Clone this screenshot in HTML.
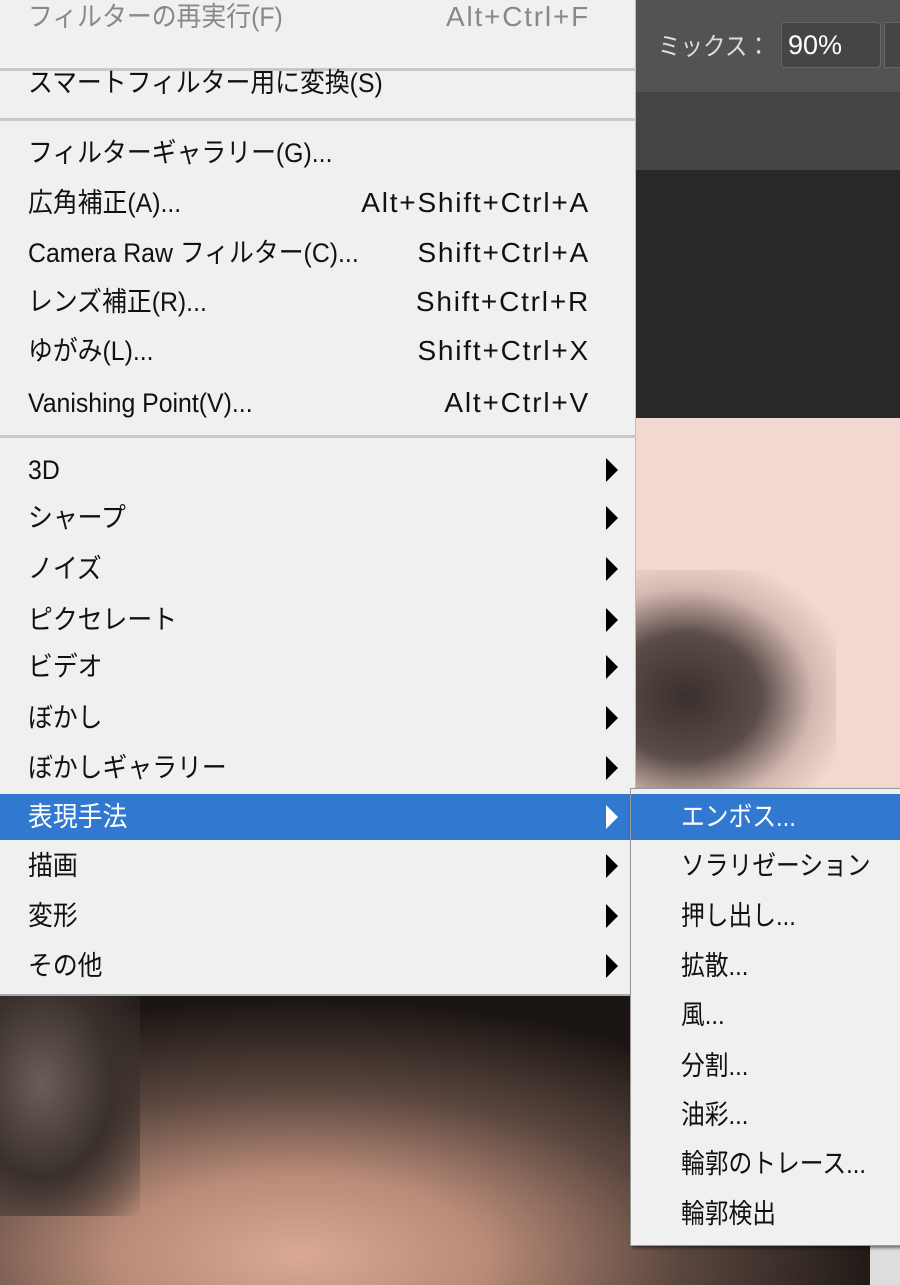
<!DOCTYPE html>
<html><head><meta charset="utf-8"><style>
*{margin:0;padding:0;box-sizing:border-box}
body{width:900px;height:1285px;overflow:hidden;position:relative;background:#1a1613;font-family:"Liberation Sans","Noto Sans CJK JP",sans-serif;}
.abs{position:absolute}
.menu{position:absolute;left:0;top:0;width:636px;height:996px;background:#f0f0f0;border-right:1px solid #bbb;border-bottom:2px solid #aaa}
.it{position:absolute;left:0;width:636px;height:46px;font-size:27px;color:#111;line-height:46px}
.it .l{position:absolute;left:28px;transform:scaleX(0.92);transform-origin:left center;white-space:nowrap}
.it .r{position:absolute;right:46px;font-size:28px;letter-spacing:1.8px;white-space:nowrap}
.it .a{position:absolute;left:606px;top:11px;width:0;height:0;border-top:12px solid transparent;border-bottom:12px solid transparent;border-left:12px solid #000}
.sep{position:absolute;left:0;width:636px;height:3px;background:#c8c8c8}
.sub{position:absolute;left:630px;top:788px;width:280px;height:458px;background:#f0f0f0;border:1px solid #999;box-shadow:2px 2px 3px rgba(0,0,0,.5)}
.si{position:absolute;left:0;width:280px;height:46px;font-size:27px;color:#111;line-height:46px}
.si span{position:absolute;left:50px;transform:scaleX(0.88);transform-origin:left center;white-space:nowrap}
</style></head><body>
<div class="abs" style="left:636px;top:0;width:264px;height:92px;background:#535353"></div>
<div class="abs" style="left:658px;top:27px;font-size:25px;color:#ddd;transform:scaleX(0.9);transform-origin:left;white-space:nowrap">ミックス：</div>
<div class="abs" style="left:781px;top:22px;width:100px;height:46px;background:#454545;border:1px solid #666;border-radius:4px;color:#fff;font-size:27px;line-height:44px;padding-left:6px">90%</div>
<div class="abs" style="left:884px;top:22px;width:20px;height:46px;background:#454545;border:1px solid #666"></div>
<div class="abs" style="left:636px;top:92px;width:264px;height:78px;background:#444"></div>
<div class="abs" style="left:636px;top:170px;width:264px;height:248px;background:#282828"></div>
<div class="abs" style="left:636px;top:418px;width:264px;height:380px;background:#f3d8d1"></div>
<div class="abs" style="left:636px;top:570px;width:200px;height:230px;background:radial-gradient(ellipse at 25% 55%,#3a302d 0%,#5a4c48 35%,rgba(180,150,145,.5) 60%,rgba(243,216,209,0) 80%)"></div>
<div class="abs" style="left:0;top:996px;width:900px;height:289px;background:radial-gradient(ellipse at 300px 260px,#d9a993 0%,#b98b78 22%,#5a463e 45%,#1a1512 70%)"></div>
<div class="abs" style="left:0;top:996px;width:140px;height:220px;background:radial-gradient(ellipse at 30% 40%,#6a5e5a 0%,#3a302c 50%,rgba(0,0,0,0) 100%)"></div>
<div class="abs" style="left:870px;top:1240px;width:30px;height:45px;background:#ddd"></div>

<div class="menu">
<div class="it" style="top:-6px;color:#888"><span class="l">フィルターの再実行(F)</span><span class="r" style="color:#888">Alt+Ctrl+F</span></div>
<div class="sep" style="top:68px"></div>
<div class="it" style="top:60px"><span class="l">スマートフィルター用に変換(S)</span></div>
<div class="sep" style="top:118px"></div>
<div class="it" style="top:130px"><span class="l">フィルターギャラリー(G)...</span></div>
<div class="it" style="top:180px"><span class="l">広角補正(A)...</span><span class="r">Alt+Shift+Ctrl+A</span></div>
<div class="it" style="top:230px"><span class="l">Camera Raw フィルター(C)...</span><span class="r">Shift+Ctrl+A</span></div>
<div class="it" style="top:279px"><span class="l">レンズ補正(R)...</span><span class="r">Shift+Ctrl+R</span></div>
<div class="it" style="top:328px"><span class="l">ゆがみ(L)...</span><span class="r">Shift+Ctrl+X</span></div>
<div class="it" style="top:380px"><span class="l">Vanishing Point(V)...</span><span class="r">Alt+Ctrl+V</span></div>
<div class="sep" style="top:435px"></div>
<div class="it" style="top:447px"><span class="l">3D</span><span class="a"></span></div>
<div class="it" style="top:495px"><span class="l">シャープ</span><span class="a"></span></div>
<div class="it" style="top:546px"><span class="l">ノイズ</span><span class="a"></span></div>
<div class="it" style="top:597px"><span class="l">ピクセレート</span><span class="a"></span></div>
<div class="it" style="top:644px"><span class="l">ビデオ</span><span class="a"></span></div>
<div class="it" style="top:695px"><span class="l">ぼかし</span><span class="a"></span></div>
<div class="it" style="top:745px"><span class="l">ぼかしギャラリー</span><span class="a"></span></div>
<div class="it" style="top:794px;background:#3078d0;color:#fff"><span class="l">表現手法</span><span class="a" style="border-left-color:#fff"></span></div>
<div class="it" style="top:843px"><span class="l">描画</span><span class="a"></span></div>
<div class="it" style="top:893px"><span class="l">変形</span><span class="a"></span></div>
<div class="it" style="top:943px"><span class="l">その他</span><span class="a"></span></div>
</div>

<div class="sub">
<div class="si" style="top:5px;background:#3078d0;color:#fff"><span>エンボス...</span></div>
<div class="si" style="top:54px"><span>ソラリゼーション</span></div>
<div class="si" style="top:104px"><span>押し出し...</span></div>
<div class="si" style="top:154px"><span>拡散...</span></div>
<div class="si" style="top:203px"><span>風...</span></div>
<div class="si" style="top:254px"><span>分割...</span></div>
<div class="si" style="top:303px"><span>油彩...</span></div>
<div class="si" style="top:352px"><span>輪郭のトレース...</span></div>
<div class="si" style="top:402px"><span>輪郭検出</span></div>
</div>
</body></html>
